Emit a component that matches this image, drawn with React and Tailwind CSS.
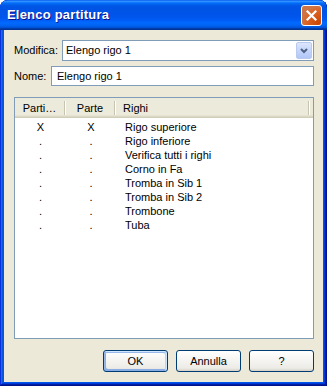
import React from "react";

const rows = [
  { a: "X", b: "X", name: "Rigo superiore" },
  { a: ".", b: ".", name: "Rigo inferiore" },
  { a: ".", b: ".", name: "Verifica tutti i righi" },
  { a: ".", b: ".", name: "Corno in Fa" },
  { a: ".", b: ".", name: "Tromba in Sib 1" },
  { a: ".", b: ".", name: "Tromba in Sib 2" },
  { a: ".", b: ".", name: "Trombone" },
  { a: ".", b: ".", name: "Tuba" },
];

function XpButton({ children, isDefault }) {
  return (
    <button
      className={
        "w-[65px] h-[22px] rounded-[3px] border border-[#003c74] text-[11px] text-black bg-[linear-gradient(180deg,#ffffff,#ecebe6_86%,#d6d0c5)] " +
        (isDefault
          ? "shadow-[inset_-1px_1px_#cee7ff,inset_1px_2px_#98b8ea,inset_-2px_2px_#bcd4f6,inset_1px_-1px_#89ade4,inset_2px_-2px_#89ade4]"
          : "")
      }
    >
      {children}
    </button>
  );
}

function HeaderSep() {
  return <div className="w-[2px] h-[14px] border-l border-[#c7c5b2] bg-white" />;
}

export default function App() {
  return (
    <div className="w-[327px] h-[386px] flex flex-col rounded-t-[8px] overflow-hidden bg-[#0055ea] shadow-[inset_-1px_-1px_#00138c,inset_1px_1px_#0831d9,inset_-2px_-2px_#001ea0,inset_2px_2px_#166aee,inset_-3px_-3px_#003bda,inset_3px_3px_#0855dd] font-['Liberation_Sans',Arial,sans-serif] text-[11px] text-black">
      {/* title bar */}
      <div className="h-[30px] shrink-0 flex items-center pl-[7px] pr-[5px] rounded-t-[8px] bg-[linear-gradient(180deg,#0058ee_0%,#3593ff_4%,#288eff_6%,#127dff_8%,#036ffc_10%,#0262ee_14%,#0057e5_20%,#0054e3_24%,#0055eb_56%,#005bf5_66%,#026afe_76%,#0062ef_86%,#0052d6_92%,#0040ab_94%,#003092_100%)]">
        <span className="flex-1 text-white font-bold text-[13px] tracking-[0.2px] [text-shadow:1px_1px_#0f1089]">
          Elenco partitura
        </span>
        <div className="w-[21px] h-[21px] rounded-[3px] border border-white bg-[radial-gradient(circle_at_90%_90%,#cc4600_0%,#dc6527_55%,#cd7546_70%),linear-gradient(180deg,#e9846a,#d14e27)] flex items-center justify-center">
          <svg width="11" height="11" viewBox="0 0 11 11">
            <path d="M1.5 1.5 L9.5 9.5 M9.5 1.5 L1.5 9.5" stroke="white" strokeWidth="2.2" strokeLinecap="square" />
          </svg>
        </div>
      </div>

      {/* body */}
      <div className="flex-1 mx-[4px] mb-[4px] bg-[#ece9d8] flex flex-col pl-[10px] pr-[9px] pt-[10px] pb-[10px]">
        <div className="flex items-center h-[21px]">
          <span className="w-[48px]">Modifica:</span>
          <div className="flex-1 h-[21px] border border-[#7f9db9] bg-white flex items-center">
            <span className="flex-1 pl-[3px]">Elengo rigo 1</span>
            <div className="w-[16px] h-[17px] mr-[1px] rounded-[2px] border border-[#b9c9ef] bg-[linear-gradient(180deg,#dce6fd,#c1d3fb_60%,#b2c6f7)] flex items-center justify-center">
              <svg width="8" height="6" viewBox="0 0 8 6">
                <path d="M1 1 L4 4 L7 1" stroke="#4d6185" strokeWidth="2" fill="none" />
              </svg>
            </div>
          </div>
        </div>

        <div className="flex items-center h-[20px] mt-[5px]">
          <span className="w-[37px]">Nome:</span>
          <div className="flex-1 h-[20px] border border-[#7f9db9] bg-white flex items-center pl-[5px]">
            Elengo rigo 1
          </div>
        </div>

        <div className="mt-[11px] h-[242px] border border-[#7f9db9] bg-white flex flex-col">
          <div className="h-[20px] flex items-center bg-[#ebeadb] shadow-[inset_0_-1px_#d0cdb8,inset_0_-2px_#dcd8c6,inset_0_-3px_#e5e2d2]">
            <span className="w-[49px] text-center">Parti…</span>
            <HeaderSep />
            <span className="w-[48px] text-center">Parte</span>
            <HeaderSep />
            <span className="w-[192px] pl-[7px]">Righi</span>
            <HeaderSep />
          </div>
          <div className="pt-[2px]">
            {rows.map((r) => (
              <div key={r.name} className="h-[14px] flex items-center">
                <span className="w-[51px] text-center">{r.a}</span>
                <span className="w-[50px] text-center">{r.b}</span>
                <span className="pl-[9px]">{r.name}</span>
              </div>
            ))}
          </div>
        </div>

        <div className="mt-[11px] flex justify-end gap-[8px]">
          <XpButton isDefault>OK</XpButton>
          <XpButton>Annulla</XpButton>
          <XpButton>?</XpButton>
        </div>
      </div>
    </div>
  );
}
